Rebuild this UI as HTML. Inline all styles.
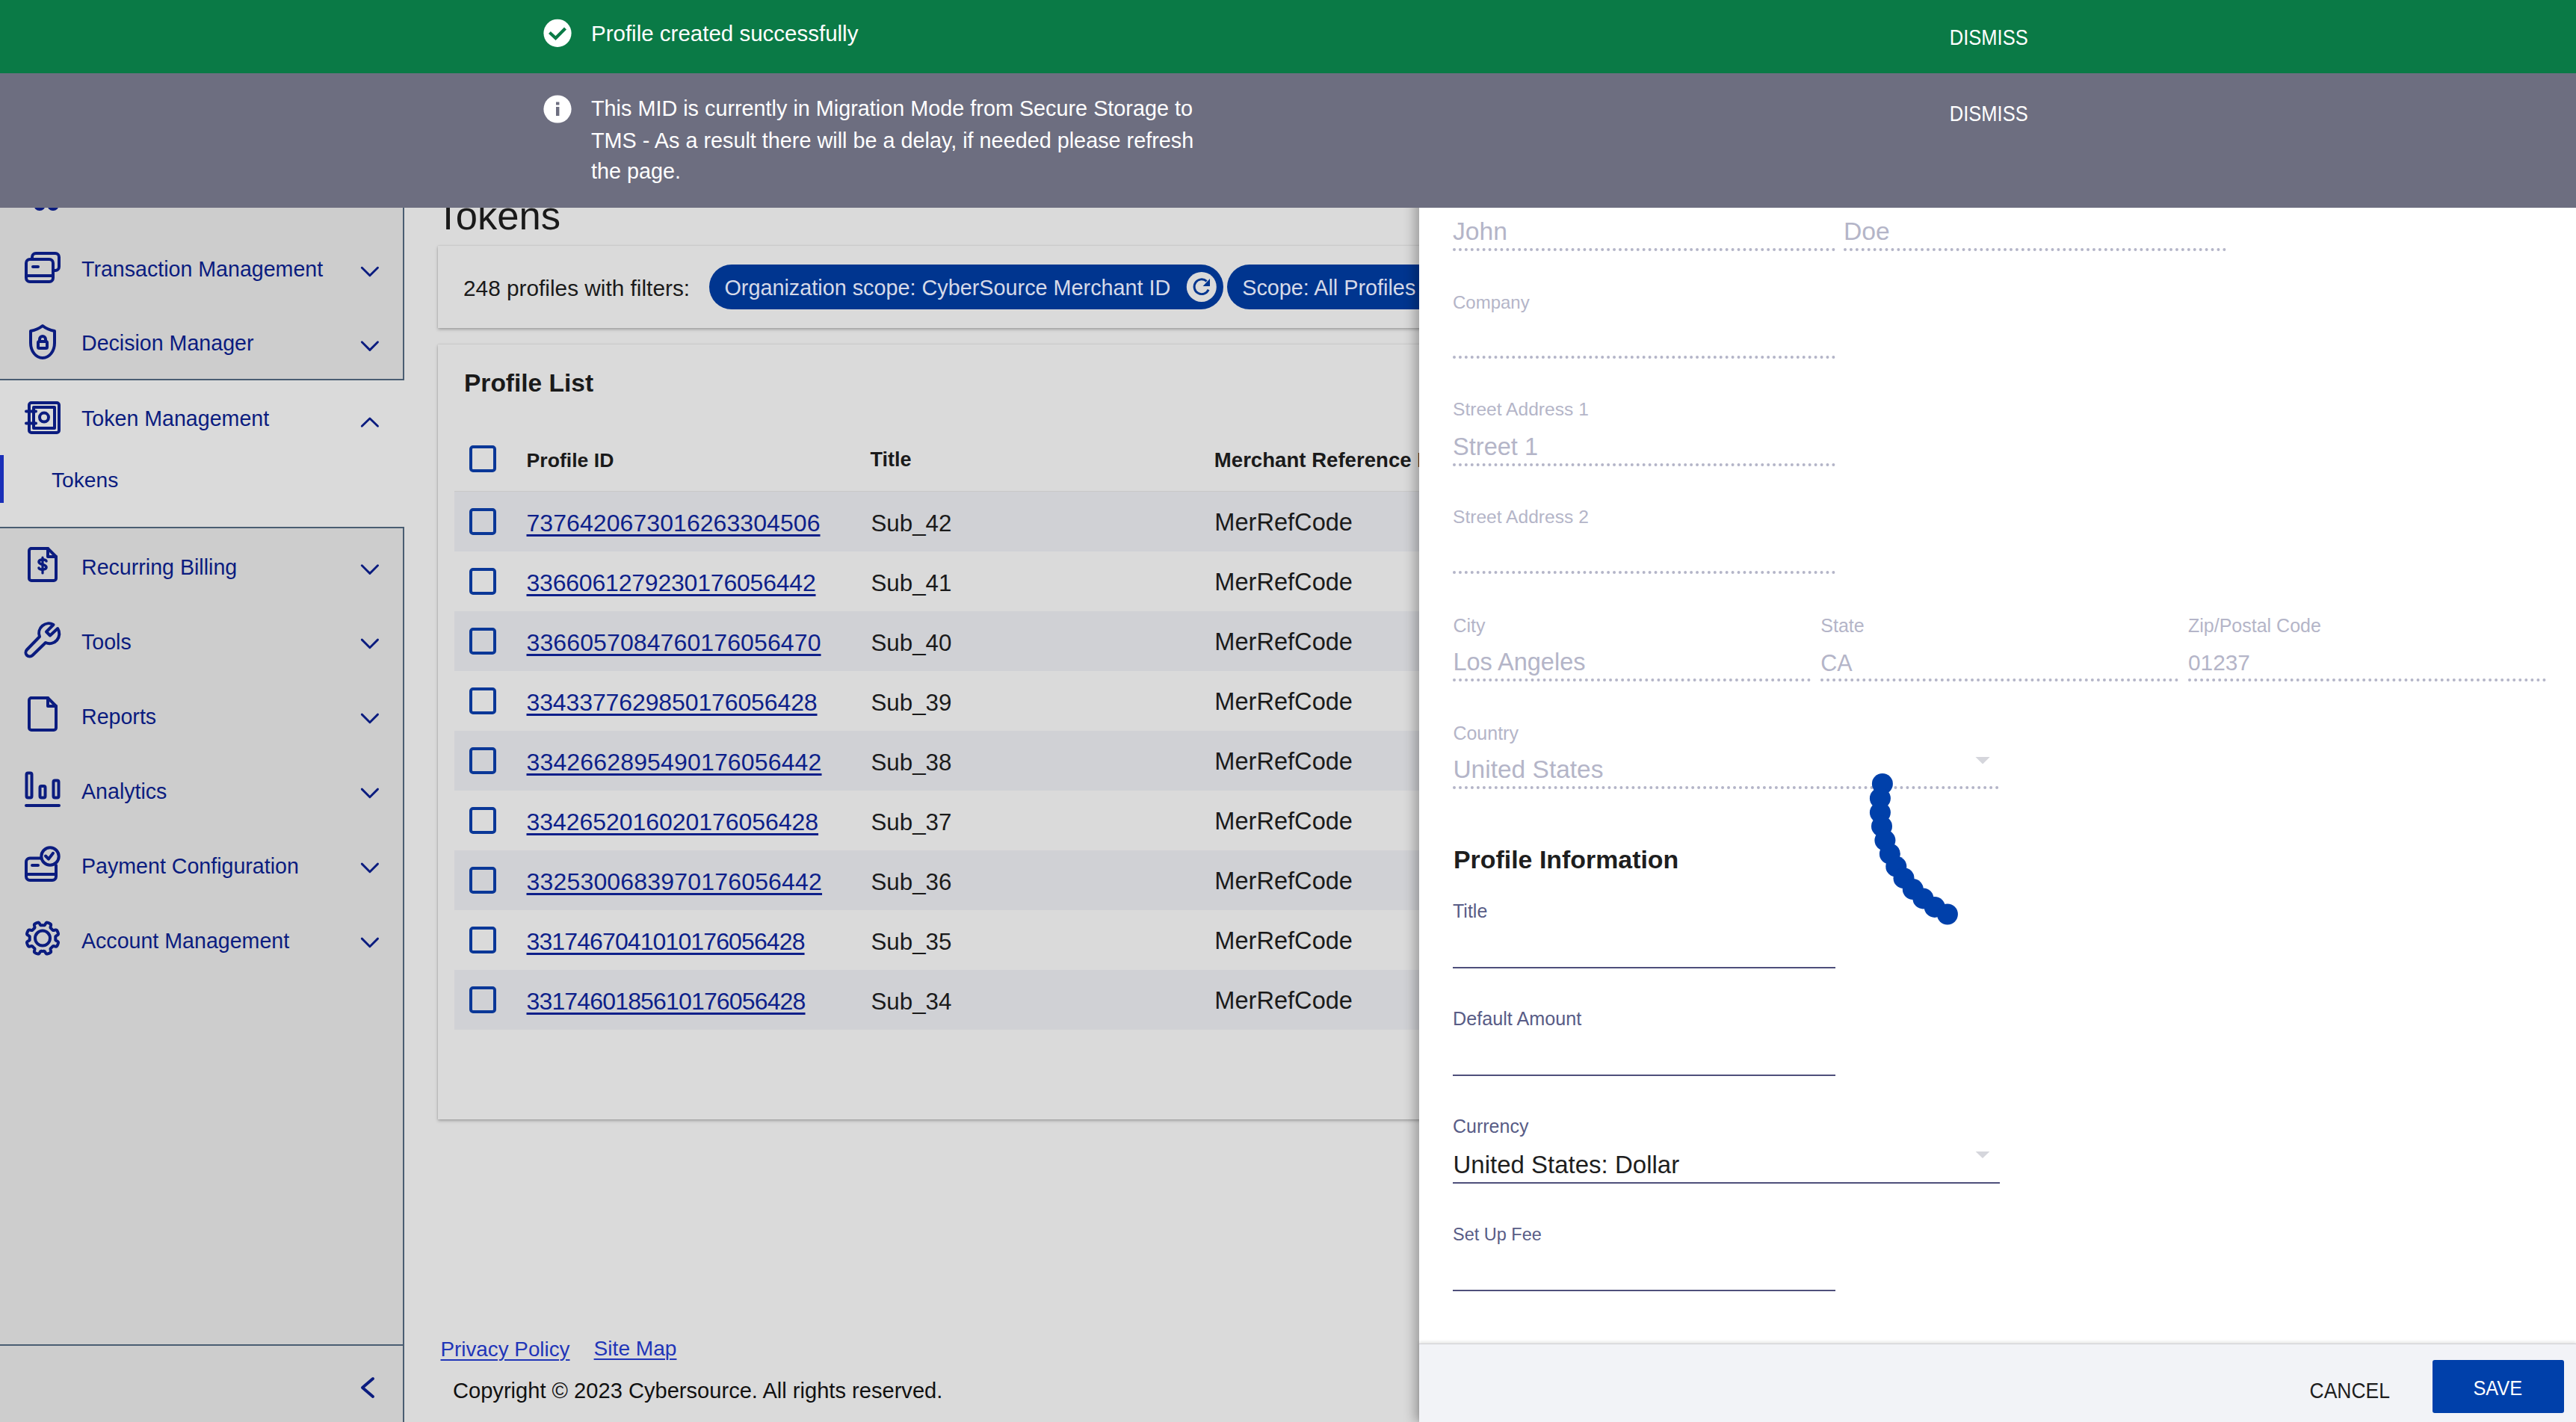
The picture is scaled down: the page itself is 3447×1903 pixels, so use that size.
<!DOCTYPE html>
<html><head><meta charset="utf-8">
<style>
html,body{margin:0;padding:0;}
body{width:3447px;height:1903px;position:relative;overflow:hidden;background:#dadada;font-family:"Liberation Sans",sans-serif;}
.t{position:absolute;line-height:1;white-space:nowrap;}
.r{position:absolute;}
svg{position:absolute;overflow:visible;}
</style></head><body>
<div class="r" style="left:0px;top:0px;width:539px;height:508px;background:#cdcdcd;"></div>
<div class="r" style="left:539px;top:0px;width:2px;height:509px;background:#4a5d72;"></div>
<div class="r" style="left:0px;top:507px;width:541px;height:2px;background:#4a5d72;"></div>
<div class="r" style="left:0px;top:706px;width:539px;height:1094px;background:#cdcdcd;"></div>
<div class="r" style="left:539px;top:705px;width:2px;height:1198px;background:#4a5d72;"></div>
<div class="r" style="left:0px;top:705px;width:541px;height:2px;background:#4a5d72;"></div>
<div class="r" style="left:0px;top:1799px;width:541px;height:2px;background:#4a5d72;"></div>
<div class="r" style="left:0px;top:1801px;width:539px;height:102px;background:#cdcdcd;"></div>
<div class="t" style="left:109.0px;top:345.5px;font-size:28.6px;color:#0b1c7f;font-weight:400;">Transaction Management</div>
<svg style="left:0;top:0" width="1" height="1"><polyline points="484.3,358.2 494.9,368.8 505.5,358.2" fill="none" stroke="#0b1c7f" stroke-width="2.9" stroke-linecap="round" stroke-linejoin="round"/></svg>
<div class="t" style="left:109.0px;top:445.1px;font-size:28.6px;color:#0b1c7f;font-weight:400;">Decision Manager</div>
<svg style="left:0;top:0" width="1" height="1"><polyline points="484.3,457.8 494.9,468.4 505.5,457.8" fill="none" stroke="#0b1c7f" stroke-width="2.9" stroke-linecap="round" stroke-linejoin="round"/></svg>
<div class="t" style="left:109.0px;top:545.5px;font-size:28.6px;color:#0b1c7f;font-weight:400;">Token Management</div>
<svg style="left:0;top:0" width="1" height="1"><polyline points="484.3,570.3 494.9,560.0 505.5,570.3" fill="none" stroke="#0b1c7f" stroke-width="2.9" stroke-linecap="round" stroke-linejoin="round"/></svg>
<div class="t" style="left:109.0px;top:745.3px;font-size:28.6px;color:#0b1c7f;font-weight:400;">Recurring Billing</div>
<svg style="left:0;top:0" width="1" height="1"><polyline points="484.3,756.8 494.9,767.4 505.5,756.8" fill="none" stroke="#0b1c7f" stroke-width="2.9" stroke-linecap="round" stroke-linejoin="round"/></svg>
<div class="t" style="left:109.0px;top:844.6px;font-size:28.6px;color:#0b1c7f;font-weight:400;">Tools</div>
<svg style="left:0;top:0" width="1" height="1"><polyline points="484.3,856.1 494.9,866.7 505.5,856.1" fill="none" stroke="#0b1c7f" stroke-width="2.9" stroke-linecap="round" stroke-linejoin="round"/></svg>
<div class="t" style="left:109.0px;top:944.6px;font-size:28.6px;color:#0b1c7f;font-weight:400;">Reports</div>
<svg style="left:0;top:0" width="1" height="1"><polyline points="484.3,956.1 494.9,966.7 505.5,956.1" fill="none" stroke="#0b1c7f" stroke-width="2.9" stroke-linecap="round" stroke-linejoin="round"/></svg>
<div class="t" style="left:109.0px;top:1044.6px;font-size:28.6px;color:#0b1c7f;font-weight:400;">Analytics</div>
<svg style="left:0;top:0" width="1" height="1"><polyline points="484.3,1056.1 494.9,1066.7 505.5,1056.1" fill="none" stroke="#0b1c7f" stroke-width="2.9" stroke-linecap="round" stroke-linejoin="round"/></svg>
<div class="t" style="left:109.0px;top:1144.6px;font-size:28.6px;color:#0b1c7f;font-weight:400;">Payment Configuration</div>
<svg style="left:0;top:0" width="1" height="1"><polyline points="484.3,1156.1 494.9,1166.7 505.5,1156.1" fill="none" stroke="#0b1c7f" stroke-width="2.9" stroke-linecap="round" stroke-linejoin="round"/></svg>
<div class="t" style="left:109.0px;top:1244.6px;font-size:28.6px;color:#0b1c7f;font-weight:400;">Account Management</div>
<svg style="left:0;top:0" width="1" height="1"><polyline points="484.3,1256.1 494.9,1266.7 505.5,1256.1" fill="none" stroke="#0b1c7f" stroke-width="2.9" stroke-linecap="round" stroke-linejoin="round"/></svg>
<div class="r" style="left:0px;top:609px;width:5px;height:64px;background:#1a2fb8;"></div>
<div class="t" style="left:69.0px;top:628.1px;font-size:28.2px;color:#0b1c7f;font-weight:400;">Tokens</div>
<svg style="left:0;top:0" width="1" height="1"><polyline points="499,1845 485,1857 499,1869" fill="none" stroke="#0b1c7f" stroke-width="4" stroke-linecap="round" stroke-linejoin="round"/></svg>
<svg style="left:0;top:0" width="1" height="1">
<!-- partial icon at top -->
<circle cx="53" cy="274" r="6" fill="none" stroke="#0b1c7f" stroke-width="4" stroke-linecap="round" stroke-linejoin="round"/><circle cx="71" cy="274" r="6" fill="none" stroke="#0b1c7f" stroke-width="4" stroke-linecap="round" stroke-linejoin="round"/>
<!-- transaction mgmt -->
<rect x="35" y="347" width="36" height="30" rx="5" fill="none" stroke="#0b1c7f" stroke-width="4" stroke-linecap="round" stroke-linejoin="round"/>
<line x1="35" y1="369" x2="71" y2="369" fill="none" stroke="#0b1c7f" stroke-width="4" stroke-linecap="round" stroke-linejoin="round"/>
<line x1="44" y1="357" x2="51" y2="357" fill="none" stroke="#0b1c7f" stroke-width="4" stroke-linecap="round" stroke-linejoin="round"/>
<path d="M43 347 V344 a5 5 0 0 1 5 -5 H74 a5 5 0 0 1 5 5 V357 a5 5 0 0 1 -5 5 H73" fill="none" stroke="#0b1c7f" stroke-width="4" stroke-linecap="round" stroke-linejoin="round"/>
<!-- shield -->
<path d="M57 436 C52 440 46 442 41 443 V459 C41 470 48 479 57 479 C66 479 73 470 73 459 V443 C68 442 62 440 57 436 Z" fill="none" stroke="#0b1c7f" stroke-width="4" stroke-linecap="round" stroke-linejoin="round"/>
<rect x="51" y="457" width="12" height="9" rx="1.5" fill="none" stroke="#0b1c7f" stroke-width="4" stroke-linecap="round" stroke-linejoin="round"/>
<path d="M53 457 V454 a4 4 0 0 1 8 0 V457" fill="none" stroke="#0b1c7f" stroke-width="4" stroke-linecap="round" stroke-linejoin="round"/>
<!-- safe -->
<rect x="39" y="539" width="40" height="40" rx="3" fill="none" stroke="#0b1c7f" stroke-width="4" stroke-linecap="round" stroke-linejoin="round"/>
<rect x="45" y="545" width="28" height="28" fill="none" stroke="#0b1c7f" stroke-width="4" stroke-linecap="round" stroke-linejoin="round"/>
<circle cx="59" cy="558.6" r="6" fill="none" stroke="#0b1c7f" stroke-width="4" stroke-linecap="round" stroke-linejoin="round"/>
<line x1="35" y1="550.5" x2="48" y2="550.5" fill="none" stroke="#0b1c7f" stroke-width="4" stroke-linecap="round" stroke-linejoin="round"/>
<line x1="35" y1="566.5" x2="48" y2="566.5" fill="none" stroke="#0b1c7f" stroke-width="4" stroke-linecap="round" stroke-linejoin="round"/>
<!-- recurring billing doc -->
<path d="M41 734 H64 L75 745 V774 a3 3 0 0 1 -3 3 H42 a3 3 0 0 1 -3 -3 V737 a3 3 0 0 1 3 -3 Z" fill="none" stroke="#0b1c7f" stroke-width="4" stroke-linecap="round" stroke-linejoin="round"/>
<path d="M64 734 V745 H75" fill="none" stroke="#0b1c7f" stroke-width="4" stroke-linecap="round" stroke-linejoin="round"/>
<path d="M62 751 C62 748 52 748 52 752 C52 756 62 755 62 759 C62 763 52 763 52 760" fill="none" stroke="#0b1c7f" stroke-width="3.6" stroke-linecap="round"/>
<line x1="57" y1="746" x2="57" y2="767" stroke="#0b1c7f" stroke-width="3.2" stroke-linecap="round"/>
<!-- wrench -->
<path d="M71.5 836 L62 845.5 L67 850.5 L77.2 841 A13 13 0 0 1 61 860 L43.5 877 A5.2 5.2 0 0 1 36 869.5 L53 852 A13 13 0 0 1 71.5 836 Z" fill="none" stroke="#0b1c7f" stroke-width="4" stroke-linecap="round" stroke-linejoin="round"/>
<!-- reports doc -->
<path d="M41 934 H64 L75 945 V974 a3 3 0 0 1 -3 3 H42 a3 3 0 0 1 -3 -3 V937 a3 3 0 0 1 3 -3 Z" fill="none" stroke="#0b1c7f" stroke-width="4" stroke-linecap="round" stroke-linejoin="round"/>
<path d="M64 934 V945 H75" fill="none" stroke="#0b1c7f" stroke-width="4" stroke-linecap="round" stroke-linejoin="round"/>
<!-- analytics -->
<rect x="35.5" y="1034.5" width="7" height="33" rx="2" fill="none" stroke="#0b1c7f" stroke-width="4" stroke-linecap="round" stroke-linejoin="round"/>
<rect x="53.5" y="1052" width="7" height="15.5" rx="2" fill="none" stroke="#0b1c7f" stroke-width="4" stroke-linecap="round" stroke-linejoin="round"/>
<rect x="71.5" y="1044.5" width="7" height="23" rx="2" fill="none" stroke="#0b1c7f" stroke-width="4" stroke-linecap="round" stroke-linejoin="round"/>
<line x1="35" y1="1078" x2="79" y2="1078" fill="none" stroke="#0b1c7f" stroke-width="4" stroke-linecap="round" stroke-linejoin="round"/>
<!-- payment config -->
<path d="M54 1148.5 H40 a5 5 0 0 0 -5 5 V1173 a5 5 0 0 0 5 5 H70 a5 5 0 0 0 5 -5 V1158" fill="none" stroke="#0b1c7f" stroke-width="4" stroke-linecap="round" stroke-linejoin="round"/>
<line x1="35" y1="1170" x2="75" y2="1170" fill="none" stroke="#0b1c7f" stroke-width="4" stroke-linecap="round" stroke-linejoin="round"/>
<line x1="43" y1="1158" x2="51" y2="1158" fill="none" stroke="#0b1c7f" stroke-width="4" stroke-linecap="round" stroke-linejoin="round"/>
<circle cx="67" cy="1146" r="11.7" fill="none" stroke="#0b1c7f" stroke-width="4" stroke-linecap="round" stroke-linejoin="round"/>
<polyline points="61,1145.5 65,1149.6 71,1141.8" fill="none" stroke="#0b1c7f" stroke-width="4" stroke-linecap="round" stroke-linejoin="round"/>
<!-- gear -->
<circle cx="57" cy="1255.6" r="10" fill="none" stroke="#0b1c7f" stroke-width="4" stroke-linecap="round" stroke-linejoin="round"/>
</svg>
<svg style="left:0;top:0" width="1" height="1"><path d="M74.30 1255.60 L74.30 1256.05 L74.28 1256.51 L74.26 1256.96 L74.26 1257.41 L74.32 1257.88 L74.63 1258.39 L75.54 1259.04 L76.90 1259.83 L77.76 1260.58 L77.99 1261.22 L77.95 1261.80 L77.81 1262.36 L77.64 1262.91 L77.44 1263.45 L77.23 1263.98 L77.01 1264.51 L76.76 1265.03 L76.50 1265.53 L76.20 1266.02 L75.82 1266.46 L75.20 1266.75 L74.06 1266.68 L72.54 1266.28 L71.44 1266.09 L70.86 1266.24 L70.49 1266.52 L70.17 1266.85 L69.86 1267.18 L69.55 1267.51 L69.23 1267.83 L68.91 1268.15 L68.58 1268.46 L68.25 1268.77 L67.92 1269.09 L67.64 1269.46 L67.49 1270.04 L67.68 1271.14 L68.08 1272.66 L68.15 1273.80 L67.86 1274.42 L67.42 1274.80 L66.93 1275.10 L66.43 1275.36 L65.91 1275.61 L65.38 1275.83 L64.85 1276.04 L64.31 1276.24 L63.76 1276.41 L63.20 1276.55 L62.62 1276.59 L61.98 1276.36 L61.23 1275.50 L60.44 1274.14 L59.79 1273.23 L59.28 1272.92 L58.81 1272.86 L58.36 1272.86 L57.91 1272.88 L57.45 1272.90 L57.00 1272.90 L56.55 1272.90 L56.09 1272.88 L55.64 1272.86 L55.19 1272.86 L54.72 1272.92 L54.21 1273.23 L53.56 1274.14 L52.77 1275.50 L52.02 1276.36 L51.38 1276.59 L50.80 1276.55 L50.24 1276.41 L49.69 1276.24 L49.15 1276.04 L48.62 1275.83 L48.09 1275.61 L47.57 1275.36 L47.07 1275.10 L46.58 1274.80 L46.14 1274.42 L45.85 1273.80 L45.92 1272.66 L46.32 1271.14 L46.51 1270.04 L46.36 1269.46 L46.08 1269.09 L45.75 1268.77 L45.42 1268.46 L45.09 1268.15 L44.77 1267.83 L44.45 1267.51 L44.14 1267.18 L43.83 1266.85 L43.51 1266.52 L43.14 1266.24 L42.56 1266.09 L41.46 1266.28 L39.94 1266.68 L38.80 1266.75 L38.18 1266.46 L37.80 1266.02 L37.50 1265.53 L37.24 1265.03 L36.99 1264.51 L36.77 1263.98 L36.56 1263.45 L36.36 1262.91 L36.19 1262.36 L36.05 1261.80 L36.01 1261.22 L36.24 1260.58 L37.10 1259.83 L38.46 1259.04 L39.37 1258.39 L39.68 1257.88 L39.74 1257.41 L39.74 1256.96 L39.72 1256.51 L39.70 1256.05 L39.70 1255.60 L39.70 1255.15 L39.72 1254.69 L39.74 1254.24 L39.74 1253.79 L39.68 1253.32 L39.37 1252.81 L38.46 1252.16 L37.10 1251.37 L36.24 1250.62 L36.01 1249.98 L36.05 1249.40 L36.19 1248.84 L36.36 1248.29 L36.56 1247.75 L36.77 1247.22 L36.99 1246.69 L37.24 1246.17 L37.50 1245.67 L37.80 1245.18 L38.18 1244.74 L38.80 1244.45 L39.94 1244.52 L41.46 1244.92 L42.56 1245.11 L43.14 1244.96 L43.51 1244.68 L43.83 1244.35 L44.14 1244.02 L44.45 1243.69 L44.77 1243.37 L45.09 1243.05 L45.42 1242.74 L45.75 1242.43 L46.08 1242.11 L46.36 1241.74 L46.51 1241.16 L46.32 1240.06 L45.92 1238.54 L45.85 1237.40 L46.14 1236.78 L46.58 1236.40 L47.07 1236.10 L47.57 1235.84 L48.09 1235.59 L48.62 1235.37 L49.15 1235.16 L49.69 1234.96 L50.24 1234.79 L50.80 1234.65 L51.38 1234.61 L52.02 1234.84 L52.77 1235.70 L53.56 1237.06 L54.21 1237.97 L54.72 1238.28 L55.19 1238.34 L55.64 1238.34 L56.09 1238.32 L56.55 1238.30 L57.00 1238.30 L57.45 1238.30 L57.91 1238.32 L58.36 1238.34 L58.81 1238.34 L59.28 1238.28 L59.79 1237.97 L60.44 1237.06 L61.23 1235.70 L61.98 1234.84 L62.62 1234.61 L63.20 1234.65 L63.76 1234.79 L64.31 1234.96 L64.85 1235.16 L65.38 1235.37 L65.91 1235.59 L66.43 1235.84 L66.93 1236.10 L67.42 1236.40 L67.86 1236.78 L68.15 1237.40 L68.08 1238.54 L67.68 1240.06 L67.49 1241.16 L67.64 1241.74 L67.92 1242.11 L68.25 1242.43 L68.58 1242.74 L68.91 1243.05 L69.23 1243.37 L69.55 1243.69 L69.86 1244.02 L70.17 1244.35 L70.49 1244.68 L70.86 1244.96 L71.44 1245.11 L72.54 1244.92 L74.06 1244.52 L75.20 1244.45 L75.82 1244.74 L76.20 1245.18 L76.50 1245.67 L76.76 1246.17 L77.01 1246.69 L77.23 1247.22 L77.44 1247.75 L77.64 1248.29 L77.81 1248.84 L77.95 1249.40 L77.99 1249.98 L77.76 1250.62 L76.90 1251.37 L75.54 1252.16 L74.63 1252.81 L74.32 1253.32 L74.26 1253.79 L74.26 1254.24 L74.28 1254.69 L74.30 1255.15 Z" fill="none" stroke="#0b1c7f" stroke-width="4" stroke-linecap="round" stroke-linejoin="round"/></svg>
<div class="t" style="left:583.5px;top:262.5px;font-size:52.6px;color:#1a1a1a;font-weight:400;">Tokens</div>
<div class="r" style="left:586px;top:329px;width:1400px;height:110px;background:#dadada;box-shadow:0 2px 4px rgba(0,0,0,0.25),0 0 2px rgba(0,0,0,0.12);"></div>
<div class="t" style="left:620.0px;top:370.7px;font-size:29.8px;color:#1a1a1a;font-weight:400;">248 profiles with filters:</div>
<div class="r" style="left:949px;top:354px;width:688px;height:60px;background:#00358f;border-radius:30px;"></div>
<div class="t" style="left:969.4px;top:371.3px;font-size:28.8px;color:#d6dae8;font-weight:400;">Organization scope: CyberSource Merchant ID</div>
<svg style="left:0;top:0" width="1" height="1"><circle cx="1607.8" cy="383.9" r="20" fill="#dadada"/><path d="M1617.1 387.6 A9.9 9.9 0 1 1 1614.6 376.3" fill="none" stroke="#00358f" stroke-width="2.9"/><path d="M1619 373 L1619 383 L1609.6 383 Z" fill="#00358f"/></svg>
<div class="r" style="left:1642px;top:354px;width:500px;height:60px;background:#00358f;border-radius:30px;"></div>
<div class="t" style="left:1662.2px;top:371.3px;font-size:28.8px;color:#d6dae8;font-weight:400;">Scope: All Profiles</div>
<div class="r" style="left:586px;top:461px;width:1400px;height:1037px;background:#dadada;box-shadow:0 2px 4px rgba(0,0,0,0.25),0 0 2px rgba(0,0,0,0.12);"></div>
<div class="t" style="left:621.0px;top:496.1px;font-size:33.5px;color:#1a1a1a;font-weight:700;">Profile List</div>
<div class="r" style="left:628px;top:595.5px;width:28px;height:28px;background:transparent;border:4px solid #0a3797;border-radius:5px;"></div>
<div class="t" style="left:704.6px;top:602.5px;font-size:26.6px;color:#1a1a1a;font-weight:700;">Profile ID</div>
<div class="t" style="left:1164.5px;top:602.1px;font-size:27px;color:#1a1a1a;font-weight:700;">Title</div>
<div class="t" style="left:1624.8px;top:601.6px;font-size:27.6px;color:#1a1a1a;font-weight:700;">Merchant Reference ID</div>
<div class="r" style="left:608px;top:656.5px;width:1300px;height:1.5px;background:#c8c8c8;"></div>
<div class="r" style="left:608px;top:658px;width:1300px;height:80px;background:#d0d1d5;"></div>
<div class="r" style="left:628px;top:680px;width:28px;height:28px;background:transparent;border:4px solid #0a3797;border-radius:5px;"></div>
<div class="t" style="left:704.5px;top:683.9px;font-size:32px;color:#0d1f8a;font-weight:400;letter-spacing:0.068px;text-decoration:underline;text-underline-offset:4px;text-decoration-thickness:3px;">7376420673016263304506</div>
<div class="t" style="left:1165.5px;top:684.5px;font-size:31.3px;color:#1a1a1a;font-weight:400;">Sub_42</div>
<div class="t" style="left:1625.3px;top:683.4px;font-size:32.6px;color:#1a1a1a;font-weight:400;">MerRefCode</div>
<div class="r" style="left:628px;top:760px;width:28px;height:28px;background:transparent;border:4px solid #0a3797;border-radius:5px;"></div>
<div class="t" style="left:704.5px;top:763.9px;font-size:32px;color:#0d1f8a;font-weight:400;letter-spacing:-0.205px;text-decoration:underline;text-underline-offset:4px;text-decoration-thickness:3px;">3366061279230176056442</div>
<div class="t" style="left:1165.5px;top:764.5px;font-size:31.3px;color:#1a1a1a;font-weight:400;">Sub_41</div>
<div class="t" style="left:1625.3px;top:763.4px;font-size:32.6px;color:#1a1a1a;font-weight:400;">MerRefCode</div>
<div class="r" style="left:608px;top:818px;width:1300px;height:80px;background:#d0d1d5;"></div>
<div class="r" style="left:628px;top:840px;width:28px;height:28px;background:transparent;border:4px solid #0a3797;border-radius:5px;"></div>
<div class="t" style="left:704.5px;top:843.9px;font-size:32px;color:#0d1f8a;font-weight:400;letter-spacing:0.114px;text-decoration:underline;text-underline-offset:4px;text-decoration-thickness:3px;">3366057084760176056470</div>
<div class="t" style="left:1165.5px;top:844.5px;font-size:31.3px;color:#1a1a1a;font-weight:400;">Sub_40</div>
<div class="t" style="left:1625.3px;top:843.4px;font-size:32.6px;color:#1a1a1a;font-weight:400;">MerRefCode</div>
<div class="r" style="left:628px;top:920px;width:28px;height:28px;background:transparent;border:4px solid #0a3797;border-radius:5px;"></div>
<div class="t" style="left:704.5px;top:923.9px;font-size:32px;color:#0d1f8a;font-weight:400;letter-spacing:-0.114px;text-decoration:underline;text-underline-offset:4px;text-decoration-thickness:3px;">3343377629850176056428</div>
<div class="t" style="left:1165.5px;top:924.5px;font-size:31.3px;color:#1a1a1a;font-weight:400;">Sub_39</div>
<div class="t" style="left:1625.3px;top:923.4px;font-size:32.6px;color:#1a1a1a;font-weight:400;">MerRefCode</div>
<div class="r" style="left:608px;top:978px;width:1300px;height:80px;background:#d0d1d5;"></div>
<div class="r" style="left:628px;top:1000px;width:28px;height:28px;background:transparent;border:4px solid #0a3797;border-radius:5px;"></div>
<div class="t" style="left:704.5px;top:1003.9px;font-size:32px;color:#0d1f8a;font-weight:400;letter-spacing:0.159px;text-decoration:underline;text-underline-offset:4px;text-decoration-thickness:3px;">3342662895490176056442</div>
<div class="t" style="left:1165.5px;top:1004.5px;font-size:31.3px;color:#1a1a1a;font-weight:400;">Sub_38</div>
<div class="t" style="left:1625.3px;top:1003.4px;font-size:32.6px;color:#1a1a1a;font-weight:400;">MerRefCode</div>
<div class="r" style="left:628px;top:1080px;width:28px;height:28px;background:transparent;border:4px solid #0a3797;border-radius:5px;"></div>
<div class="t" style="left:704.5px;top:1083.9px;font-size:32px;color:#0d1f8a;font-weight:400;letter-spacing:-0.045px;text-decoration:underline;text-underline-offset:4px;text-decoration-thickness:3px;">3342652016020176056428</div>
<div class="t" style="left:1165.5px;top:1084.5px;font-size:31.3px;color:#1a1a1a;font-weight:400;">Sub_37</div>
<div class="t" style="left:1625.3px;top:1083.4px;font-size:32.6px;color:#1a1a1a;font-weight:400;">MerRefCode</div>
<div class="r" style="left:608px;top:1138px;width:1300px;height:80px;background:#d0d1d5;"></div>
<div class="r" style="left:628px;top:1160px;width:28px;height:28px;background:transparent;border:4px solid #0a3797;border-radius:5px;"></div>
<div class="t" style="left:704.5px;top:1163.9px;font-size:32px;color:#0d1f8a;font-weight:400;letter-spacing:0.182px;text-decoration:underline;text-underline-offset:4px;text-decoration-thickness:3px;">3325300683970176056442</div>
<div class="t" style="left:1165.5px;top:1164.5px;font-size:31.3px;color:#1a1a1a;font-weight:400;">Sub_36</div>
<div class="t" style="left:1625.3px;top:1163.4px;font-size:32.6px;color:#1a1a1a;font-weight:400;">MerRefCode</div>
<div class="r" style="left:628px;top:1240px;width:28px;height:28px;background:transparent;border:4px solid #0a3797;border-radius:5px;"></div>
<div class="t" style="left:704.5px;top:1243.9px;font-size:32px;color:#0d1f8a;font-weight:400;letter-spacing:-0.886px;text-decoration:underline;text-underline-offset:4px;text-decoration-thickness:3px;">3317467041010176056428</div>
<div class="t" style="left:1165.5px;top:1244.5px;font-size:31.3px;color:#1a1a1a;font-weight:400;">Sub_35</div>
<div class="t" style="left:1625.3px;top:1243.4px;font-size:32.6px;color:#1a1a1a;font-weight:400;">MerRefCode</div>
<div class="r" style="left:608px;top:1298px;width:1300px;height:80px;background:#d0d1d5;"></div>
<div class="r" style="left:628px;top:1320px;width:28px;height:28px;background:transparent;border:4px solid #0a3797;border-radius:5px;"></div>
<div class="t" style="left:704.5px;top:1323.9px;font-size:32px;color:#0d1f8a;font-weight:400;letter-spacing:-0.841px;text-decoration:underline;text-underline-offset:4px;text-decoration-thickness:3px;">3317460185610176056428</div>
<div class="t" style="left:1165.5px;top:1324.5px;font-size:31.3px;color:#1a1a1a;font-weight:400;">Sub_34</div>
<div class="t" style="left:1625.3px;top:1323.4px;font-size:32.6px;color:#1a1a1a;font-weight:400;">MerRefCode</div>
<div class="t" style="left:589.5px;top:1791.5px;font-size:27.8px;color:#1f35b8;font-weight:400;text-decoration:underline;text-underline-offset:4px;text-decoration-thickness:2px;">Privacy Policy</div>
<div class="t" style="left:794.6px;top:1791.2px;font-size:28.1px;color:#1f35b8;font-weight:400;text-decoration:underline;text-underline-offset:4px;text-decoration-thickness:2px;">Site Map</div>
<div class="t" style="left:606.0px;top:1846.9px;font-size:29.1px;color:#111;font-weight:400;">Copyright © 2023 Cybersource. All rights reserved.</div>
<div class="r" style="left:1899px;top:0px;width:1548px;height:1903px;background:#ffffff;box-shadow:-6px 0 14px rgba(0,0,0,0.28);"></div>
<div class="t" style="left:1944.0px;top:292.5px;font-size:33.7px;color:#b4b5c8;font-weight:400;">John</div>
<div class="t" style="left:2467.0px;top:292.5px;font-size:33.7px;color:#b4b5c8;font-weight:400;">Doe</div>
<div class="r" style="left:1944px;top:331.7px;width:512px;height:0px;background:transparent;border-top:4px dotted #b4b5c8;"></div>
<div class="r" style="left:2467px;top:331.7px;width:512px;height:0px;background:transparent;border-top:4px dotted #b4b5c8;"></div>
<div class="t" style="left:1944.0px;top:392.5px;font-size:24px;color:#b4b5c8;font-weight:400;">Company</div>
<div class="r" style="left:1944px;top:475.6px;width:512px;height:0px;background:transparent;border-top:4px dotted #b4b5c8;"></div>
<div class="t" style="left:1944.0px;top:535.5px;font-size:24.6px;color:#b4b5c8;font-weight:400;">Street Address 1</div>
<div class="t" style="left:1944.0px;top:581.6px;font-size:32.6px;color:#b4b5c8;font-weight:400;">Street 1</div>
<div class="r" style="left:1944px;top:619.5px;width:512px;height:0px;background:transparent;border-top:4px dotted #b4b5c8;"></div>
<div class="t" style="left:1944.0px;top:679.8px;font-size:24.6px;color:#b4b5c8;font-weight:400;">Street Address 2</div>
<div class="r" style="left:1944px;top:763.8px;width:512px;height:0px;background:transparent;border-top:4px dotted #b4b5c8;"></div>
<div class="t" style="left:1944.4px;top:824.8px;font-size:25px;color:#b4b5c8;font-weight:400;">City</div>
<div class="t" style="left:2436.3px;top:824.8px;font-size:25px;color:#b4b5c8;font-weight:400;">State</div>
<div class="t" style="left:2928.0px;top:824.8px;font-size:25px;color:#b4b5c8;font-weight:400;">Zip/Postal Code</div>
<div class="t" style="left:1944.4px;top:869.8px;font-size:32.5px;color:#b4b5c8;font-weight:400;">Los Angeles</div>
<div class="t" style="left:2436.3px;top:871.5px;font-size:30.5px;color:#b4b5c8;font-weight:400;">CA</div>
<div class="t" style="left:2928.0px;top:872.1px;font-size:29.8px;color:#b4b5c8;font-weight:400;">01237</div>
<div class="r" style="left:1944px;top:908px;width:479px;height:0px;background:transparent;border-top:4px dotted #b4b5c8;"></div>
<div class="r" style="left:2436px;top:908px;width:479px;height:0px;background:transparent;border-top:4px dotted #b4b5c8;"></div>
<div class="r" style="left:2928px;top:908px;width:479px;height:0px;background:transparent;border-top:4px dotted #b4b5c8;"></div>
<div class="t" style="left:1944.4px;top:968.8px;font-size:25px;color:#b4b5c8;font-weight:400;">Country</div>
<div class="t" style="left:1944.4px;top:1012.6px;font-size:33.5px;color:#b4b5c8;font-weight:400;">United States</div>
<div class="r" style="left:1944px;top:1051.9px;width:731px;height:0px;background:transparent;border-top:4px dotted #b4b5c8;"></div>
<svg style="left:0;top:0" width="1" height="1"><path d="M2643.5 1013 H2662.7 L2653.1 1022.6 Z" fill="#d5d6dc"/></svg>
<div class="t" style="left:1945.0px;top:1134.0px;font-size:33.9px;color:#1e1e1e;font-weight:700;">Profile Information</div>
<div class="t" style="left:1944.0px;top:1207.3px;font-size:25px;color:#585c86;font-weight:400;">Title</div>
<div class="r" style="left:1944px;top:1294px;width:512px;height:2px;background:#4e4f7b;"></div>
<div class="t" style="left:1944.0px;top:1351.4px;font-size:25.2px;color:#585c86;font-weight:400;">Default Amount</div>
<div class="r" style="left:1944px;top:1438px;width:512px;height:2px;background:#4e4f7b;"></div>
<div class="t" style="left:1944.0px;top:1495.3px;font-size:25px;color:#585c86;font-weight:400;">Currency</div>
<div class="t" style="left:1944.5px;top:1542.1px;font-size:33px;color:#1e1e1e;font-weight:400;">United States: Dollar</div>
<div class="r" style="left:1944px;top:1582px;width:732px;height:2px;background:#4e4f7b;"></div>
<svg style="left:0;top:0" width="1" height="1"><path d="M2643.6 1541 H2662.4 L2653 1550 Z" fill="#d5d6dc"/></svg>
<div class="t" style="left:1944.0px;top:1640.8px;font-size:23.5px;color:#585c86;font-weight:400;">Set Up Fee</div>
<div class="r" style="left:1944px;top:1726px;width:512px;height:2px;background:#4e4f7b;"></div>
<div class="r" style="left:1899px;top:1798px;width:1548px;height:105px;background:#f2f3f7;border-top:1px solid #cfcfd4;box-shadow:0 -2px 4px rgba(0,0,0,0.12);"></div>
<div class="t" style="left:3090.5px;top:1848.6px;font-size:26.5px;color:#1e1e1e;font-weight:400;transform:scaleY(1.1);transform-origin:0 22.4px;">CANCEL</div>
<div class="r" style="left:3255px;top:1820px;width:176px;height:71px;background:#0040aa;border-radius:3px;"></div>
<div class="t" style="left:3309.5px;top:1845.6px;font-size:25.3px;color:#ffffff;font-weight:400;transform:scaleY(1.1);transform-origin:0 21.4px;">SAVE</div>
<svg style="left:0;top:0" width="1" height="1"><circle cx="2518.9" cy="1049" r="14" fill="#0040aa"/><circle cx="2515.9" cy="1068.3" r="14" fill="#0040aa"/><circle cx="2515.9" cy="1087.3" r="14" fill="#0040aa"/><circle cx="2518" cy="1105.8" r="14" fill="#0040aa"/><circle cx="2522.4" cy="1124.6" r="14" fill="#0040aa"/><circle cx="2528.9" cy="1142.7" r="14" fill="#0040aa"/><circle cx="2537.3" cy="1159.7" r="14" fill="#0040aa"/><circle cx="2547.5" cy="1175.2" r="14" fill="#0040aa"/><circle cx="2559.8" cy="1190.1" r="14" fill="#0040aa"/><circle cx="2573.4" cy="1202.4" r="14" fill="#0040aa"/><circle cx="2588.8" cy="1213.9" r="14" fill="#0040aa"/><circle cx="2605.9" cy="1223.5" r="14" fill="#0040aa"/></svg>
<div class="r" style="left:0px;top:0px;width:3447px;height:98px;background:#0a7a46;"></div>
<div class="r" style="left:0px;top:98px;width:3447px;height:180px;background:#6d6e80;"></div>
<svg style="left:0;top:0" width="1" height="1"><circle cx="746" cy="44.3" r="18.6" fill="#fff"/><polyline points="737,45 743.5,51 755,39.5" fill="none" stroke="#0a7a46" stroke-width="4.2" stroke-linecap="square"/><circle cx="746" cy="146" r="18.6" fill="#fff"/><rect x="744" y="143" width="4.4" height="12" fill="#6d6e80"/><rect x="744" y="136.5" width="4.4" height="4" fill="#6d6e80"/></svg>
<div class="t" style="left:791.0px;top:29.7px;font-size:29.5px;color:#fff;font-weight:400;">Profile created successfully</div>
<div class="t" style="left:2608.8px;top:39.4px;font-size:25.5px;color:#fff;font-weight:400;transform:scaleY(1.12);transform-origin:0 21.6px;">DISMISS</div>
<div class="t" style="left:791.0px;top:131.2px;font-size:28.8px;color:#fff;font-weight:400;">This MID is currently in Migration Mode from Secure Storage to</div>
<div class="t" style="left:791.0px;top:173.6px;font-size:28.8px;color:#fff;font-weight:400;">TMS - As a result there will be a delay, if needed please refresh</div>
<div class="t" style="left:791.0px;top:215.1px;font-size:28.8px;color:#fff;font-weight:400;">the page.</div>
<div class="t" style="left:2608.8px;top:141.4px;font-size:25.5px;color:#fff;font-weight:400;transform:scaleY(1.12);transform-origin:0 21.6px;">DISMISS</div>
</body></html>
